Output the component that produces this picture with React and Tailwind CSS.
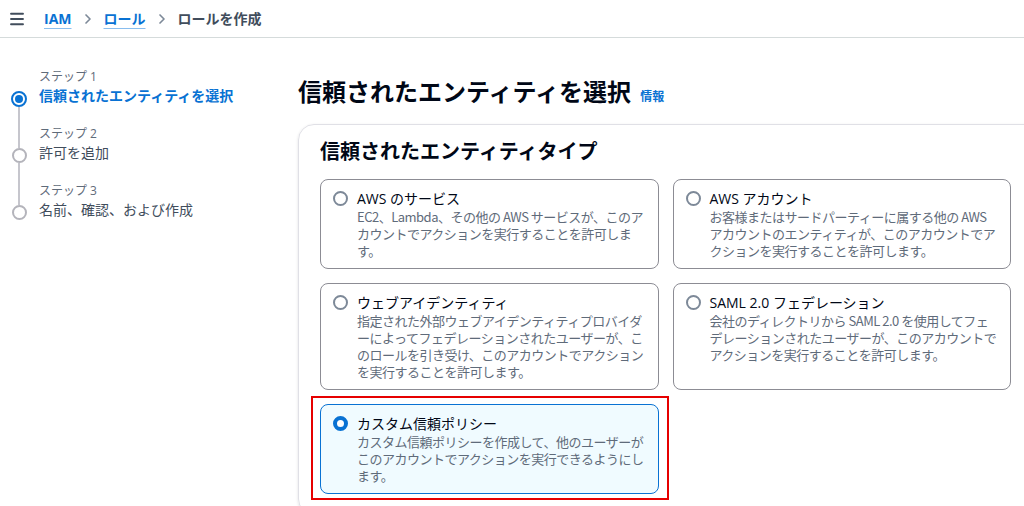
import { Menu, ChevronRight } from 'lucide-react';

const font = { fontFamily: '"Open Sans", "Noto Sans CJK JP", sans-serif' };

const steps = [
  { label: 'ステップ 1', title: '信頼されたエンティティを選択', active: true },
  { label: 'ステップ 2', title: '許可を追加' },
  { label: 'ステップ 3', title: '名前、確認、および作成' },
];

// descriptions are kept as pre-broken lines so the cards wrap the same in every font
const entityTypes = [
  {
    title: 'AWS のサービス',
    lines: ['EC2、Lambda、その他の AWS サービスが、このア', 'カウントでアクションを実行することを許可しま', 'す。'],
  },
  {
    title: 'AWS アカウント',
    lines: [
      'お客様またはサードパーティーに属する他の AWS',
      'アカウントのエンティティが、このアカウントでア',
      'クションを実行することを許可します。',
    ],
  },
  {
    title: 'ウェブアイデンティティ',
    lines: [
      '指定された外部ウェブアイデンティティプロバイダ',
      'ーによってフェデレーションされたユーザーが、こ',
      'のロールを引き受け、このアカウントでアクション',
      'を実行することを許可します。',
    ],
  },
  {
    title: 'SAML 2.0 フェデレーション',
    lines: [
      '会社のディレクトリから SAML 2.0 を使用してフェ',
      'デレーションされたユーザーが、このアカウントで',
      'アクションを実行することを許可します。',
    ],
  },
  {
    title: 'カスタム信頼ポリシー',
    lines: [
      'カスタム信頼ポリシーを作成して、他のユーザーが',
      'このアカウントでアクションを実行できるようにし',
      'ます。',
    ],
    selected: true,
  },
];

const Radio = ({ checked }) =>
  checked ? (
    <span className="mt-[2px] h-[15px] w-[15px] shrink-0 rounded-full border-[4px] border-[#0972d3] bg-white" />
  ) : (
    <span className="mt-[2px] h-[15px] w-[15px] shrink-0 rounded-full border-2 border-[#7d8998] bg-white" />
  );

const TypeCard = ({ item }) => (
  <div
    className={`flex gap-[9px] rounded-[8px] border-[1.5px] pl-[12px] pr-[10px] pt-[9px] pb-[9px] ${
      item.selected ? 'border-[#0972d3] bg-[#f0fbff]' : 'border-[#8c8c94] bg-white'
    }`}
  >
    <Radio checked={item.selected} />
    <div className="min-w-0">
      <div className="text-[14px] leading-[19px] text-[#000716]">{item.title}</div>
      <div
        className="text-[13px] leading-[17px] tracking-[-0.5px] text-[#5f6b7a]"
        style={{ fontFamily: '"Noto Sans CJK JP", sans-serif' }}
      >
        {item.lines.map((l) => (
          <div key={l} className="whitespace-nowrap">{l}</div>
        ))}
      </div>
    </div>
  </div>
);

const App = () => {
  return (
    <div className="h-[506px] w-[1024px] overflow-hidden bg-white" style={font}>
      <header className="flex h-[38px] items-center border-b border-[#d5dbdb] pl-[8px]">
        <Menu size={18} strokeWidth={2.5} className="text-[#414d5c]" />
        <nav className="ml-[18px] flex items-center gap-[8px] text-[14px] font-bold">
          <span className="text-[#0972d3] underline decoration-[#89bdee] underline-offset-[4px]">IAM</span>
          <ChevronRight size={16} strokeWidth={2.5} className="text-[#7d8998]" />
          <span className="text-[#0972d3] underline decoration-[#89bdee] underline-offset-[4px]">ロール</span>
          <ChevronRight size={16} strokeWidth={2.5} className="text-[#7d8998]" />
          <span className="text-[#414d5c]">ロールを作成</span>
        </nav>
      </header>

      <div className="flex">
        <aside className="w-[298px] shrink-0 pl-[11px] pt-[31px]">
          {steps.map((s, i) => (
            <div key={s.label} className="flex gap-[12px]">
              <div className="flex w-[16px] flex-col items-center">
                <div className={`h-[22px] w-[2px] ${i > 0 ? 'bg-[#c6c6cd]' : ''}`} />
                {s.active ? (
                  <span className="h-[16px] w-[16px] rounded-full border-[2.5px] border-[#0972d3] p-[2px]">
                    <span className="block h-full w-full rounded-full bg-[#0972d3]" />
                  </span>
                ) : (
                  <span className="h-[15px] w-[15px] rounded-full border-2 border-[#b4b4bb]" />
                )}
                {i < steps.length - 1 && <div className="w-[2px] flex-1 bg-[#c6c6cd]" />}
              </div>
              <div className="pb-[19px]">
                <div className="text-[12px] leading-[16px] text-[#5f6b7a]">{s.label}</div>
                <div
                  className={`text-[14px] leading-[22px] ${
                    s.active ? 'font-bold text-[#0972d3]' : 'text-[#414d5c]'
                  }`}
                >
                  {s.title}
                </div>
              </div>
            </div>
          ))}
        </aside>

        <main className="flex-1 pt-[37px]">
          <div className="flex items-baseline gap-[9px]">
            <h1 className="text-[24px] font-bold leading-[34px] text-[#000716]">信頼されたエンティティを選択</h1>
            <span className="text-[12px] font-bold text-[#0972d3]">情報</span>
          </div>

          <section className="mt-[15px] mr-[-20px] rounded-[16px] border border-[#e0e0e6] px-[21px] pt-[14px] pb-[20px] shadow-[0_1px_3px_rgba(0,7,22,0.12)]">
            <h2 className="text-[20px] font-bold leading-[26px] text-[#000716]">信頼されたエンティティタイプ</h2>
            <div className="mt-[14px] grid w-[691px] grid-cols-2 gap-[14px]">
              {entityTypes.map((t) =>
                t.selected ? (
                  <div key={t.title} className="relative">
                    <TypeCard item={t} />
                    <div className="pointer-events-none absolute -top-[8px] -left-[9px] -right-[10px] -bottom-[6px] border-2 border-[#e60000]" />
                  </div>
                ) : (
                  <TypeCard key={t.title} item={t} />
                )
              )}
            </div>
          </section>
        </main>
      </div>
    </div>
  );
};

export default App;
